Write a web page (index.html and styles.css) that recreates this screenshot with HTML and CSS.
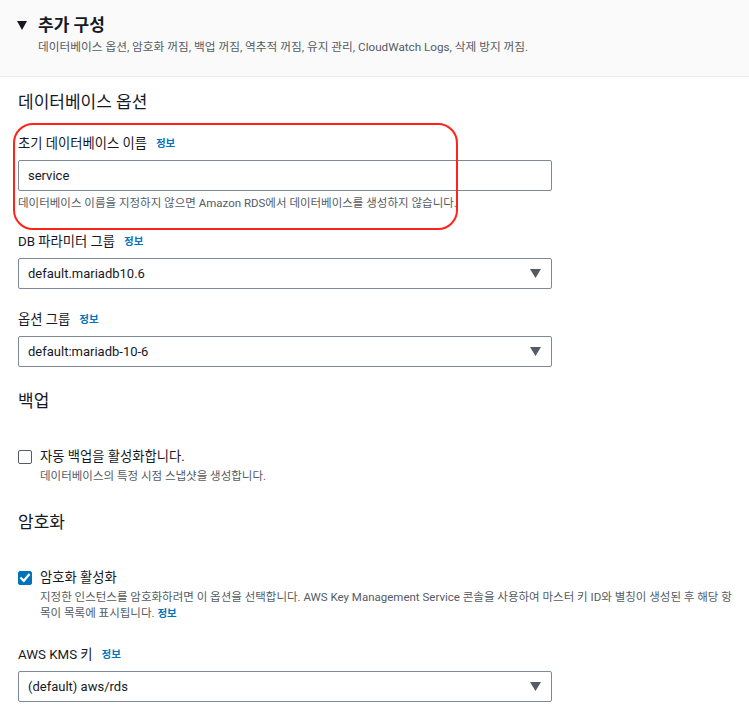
FILE: index.html
```html
<!DOCTYPE html>
<html lang="ko">
<head>
<meta charset="utf-8">
<title>추가 구성</title>
<link rel="stylesheet" href="styles.css">
</head>
<body>
<section class="panel-head">
  <div class="title-row">
    <svg class="caret" width="10" height="9" viewBox="0 0 10 9"><path d="M0 0H10L5 9Z" fill="#16191f"/></svg>
    <h1 class="title">추가 구성</h1>
  </div>
  <p class="subtitle">데이터베이스 옵션, 암호화 꺼짐, 백업 꺼짐, 역추적 꺼짐, 유지 관리, CloudWatch Logs, 삭제 방지 꺼짐.</p>
</section>

<main class="panel-body">
  <h2 class="section-title first">데이터베이스 옵션</h2>

  <div class="field highlighted">
    <div class="label"><span>초기 데이터베이스 이름</span><a class="info">정보</a></div>
    <div class="input">service</div>
    <div class="hint">데이터베이스 이름을 지정하지 않으면 Amazon RDS에서 데이터베이스를 생성하지 않습니다.</div>
  </div>

  <div class="field">
    <div class="label"><span>DB 파라미터 그룹</span><a class="info">정보</a></div>
    <div class="select"><span>default.mariadb10.6</span><svg width="11" height="9" viewBox="0 0 11 9"><path d="M0 0H11L5.5 9Z" fill="#545b64"/></svg></div>
  </div>

  <div class="field">
    <div class="label"><span>옵션 그룹</span><a class="info">정보</a></div>
    <div class="select"><span>default:mariadb-10-6</span><svg width="11" height="9" viewBox="0 0 11 9"><path d="M0 0H11L5.5 9Z" fill="#545b64"/></svg></div>
  </div>

  <h2 class="section-title">백업</h2>

  <div class="check">
    <span class="box"></span>
    <div class="check-text">
      <div class="check-label">자동 백업을 활성화합니다.</div>
      <div class="check-desc">데이터베이스의 특정 시점 스냅샷을 생성합니다.</div>
    </div>
  </div>

  <h2 class="section-title second">암호화</h2>

  <div class="check">
    <span class="box checked"><svg width="14" height="14" viewBox="0 0 14 14"><path d="M3.2 7.2L5.8 9.8L10.8 3.8" fill="none" stroke="#fff" stroke-width="2.2" stroke-linecap="square"/></svg></span>
    <div class="check-text wide">
      <div class="check-label">암호화 활성화</div>
      <div class="check-desc">지정한 인스턴스를 암호화하려면 이 옵션을 선택합니다. AWS Key Management Service 콘솔을 사용하여 마스터 키 ID와 별칭이 생성된 후 해당 항목이 목록에 표시됩니다. <a class="info">정보</a></div>
    </div>
  </div>

  <div class="field kms">
    <div class="label"><span>AWS KMS 키</span><a class="info">정보</a></div>
    <div class="select"><span>(default) aws/rds</span><svg width="11" height="9" viewBox="0 0 11 9"><path d="M0 0H11L5.5 9Z" fill="#545b64"/></svg></div>
  </div>
</main>
</body>
</html>
```
FILE: styles.css
```css
* { box-sizing: border-box; }
body {
  margin: 0;
  background: #ffffff;
  color: #16191f;
  font-family: Roboto, "Noto Sans CJK KR", sans-serif;
  width: 749px;
  overflow: hidden;
}
.panel-head {
  background: #fafafa;
  border-bottom: 1px solid #e9ebed;
  height: 77px;
  padding: 14px 0 0 17px;
}
.title-row {
  display: flex;
  align-items: center;
  gap: 11px;
  height: 22px;
}
.caret { flex: none; }
.title {
  margin: 0;
  font-size: 17px;
  font-weight: 700;
  line-height: 22px;
}
.subtitle {
  margin: 3px 0 0 21px;
  font-size: 11.7px;
  line-height: 16px;
  height: 16px;
  color: #545b64;
  white-space: nowrap;
}
.panel-body {
  padding: 0 0 0 18px;
}
.section-title {
  margin: 23px 0 0;
  font-size: 17px;
  font-weight: 400;
  line-height: 22px;
  height: 22px;
}
.section-title.first { margin-top: 14px; }
.section-title.second { margin-top: 27px; }
.field {
  width: 534px;
  margin-top: 22px;
}
.field.highlighted {
  position: relative;
}
.field.highlighted::before {
  content: "";
  position: absolute;
  left: -5px;
  top: -12px;
  width: 441px;
  height: 103px;
  border: 2.5px solid #ff2319;
  border-radius: 20px;
  pointer-events: none;
}
.label {
  display: flex;
  align-items: center;
  gap: 9px;
  height: 18px;
  font-size: 13.3px;
  line-height: 18px;
  margin-bottom: 7px;
}
.info {
  color: #0073bb;
  font-weight: 700;
  font-size: 10.5px;
  line-height: 1;
}
.input, .select {
  height: 31px;
  border: 1px solid #7d8998;
  border-radius: 2px;
  padding: 0 9px;
  font-size: 13px;
  display: flex;
  align-items: center;
}
.select {
  justify-content: space-between;
  padding-right: 10px;
}
.hint {
  margin-top: 4px;
  font-size: 11.5px;
  line-height: 16px;
  height: 16px;
  color: #545b64;
  white-space: nowrap;
}
.check {
  display: flex;
  gap: 8px;
  margin-top: 36px;
}
.box {
  flex: none;
  width: 14px;
  height: 14px;
  margin-top: 2px;
  border: 1px solid #545b64;
  border-radius: 2px;
  display: flex;
}
.box.checked {
  background: #0073bb;
  border-color: #0073bb;
}
.box.checked svg { margin: -1px; }
.check-text.wide { width: 702px; }
.check-label {
  font-size: 13.3px;
  line-height: 18px;
  height: 18px;
}
.check-desc {
  font-size: 11.5px;
  line-height: 16px;
  color: #545b64;
  margin-top: 2px;
  word-break: break-all;
}
.check-desc .info { font-size: 10.5px; }
.field.kms { margin-top: 25px; }
```
